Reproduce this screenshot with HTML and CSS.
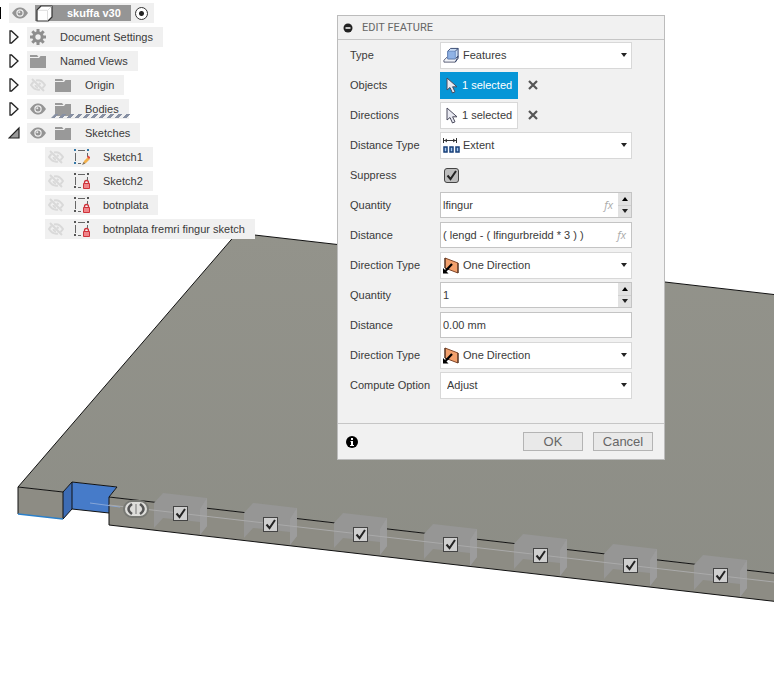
FILE: index.html
```html
<!DOCTYPE html>
<html lang="en">
<head>
<meta charset="utf-8">
<title>skuffa v30</title>
<link rel="stylesheet" href="styles.css">
</head>
<body>
<svg class="defs" aria-hidden="true">
  <symbol id="eye" viewBox="0 0 16 12"><path d="M0 6C3 1.500 5.500 .5 8 .5s5 1 8 5.500c-3 4.500-5.500 5.500-8 5.500S3 10.500 0 6z" fill="#949494"/><circle cx="8" cy="6" r="3.700" fill="#f0f0f0"/><circle cx="8" cy="6" r="2.500" fill="#949494"/><circle cx="7.300" cy="5.300" r="1" fill="#e8e8e8"/></symbol>
  <symbol id="eye-off" viewBox="0 0 16 14"><g fill="none" stroke="#d9d9d9" stroke-width="2"><path d="M2 1l12 12"/><path d="M6 2.500c4-1 7 1.500 9 4.500-.8 1.200-1.500 2-2.500 3M10 11.500C6 12.500 3 10 1 7c.8-1.200 1.500-2 2.500-3"/><path d="M5.500 7c0 1.500 1.500 2.500 2.500 2.500M9 5l1.500 1.500"/></g></symbol>
  <symbol id="folder" viewBox="0 0 16 13"><path d="M0 0h7l1.500 2H0z" fill="#999"/><path d="M0 3h9l1.500-2H16v12H0z" fill="#999"/></symbol>
  <symbol id="gear" viewBox="0 0 16 16"><circle cx="8" cy="8" r="4.200" fill="none" stroke="#8e8e8e" stroke-width="3"/><path d="M8 0v3M8 13v3M0 8h3M13 8h3M2.300 2.300l2.200 2.200M11.500 11.500l2.200 2.200M13.700 2.300l-2.200 2.200M4.500 11.500l-2.200 2.200" stroke="#8e8e8e" stroke-width="3"/></symbol>
  <symbol id="closed" viewBox="0 0 12 14"><path d="M2 1h1.500L10 7l-6.500 6H2z" fill="#fafafa" stroke="#222" stroke-width="1.300"/></symbol>
  <symbol id="open" viewBox="0 0 12 12"><path d="M11 1v10H1z" fill="#999" stroke="#222" stroke-width="1.200"/></symbol>
  <symbol id="frame" viewBox="0 0 16 16"><path d="M4 1.500h7M1.500 4v8M13.500 4v4M4 14.500h3" stroke="#666" fill="none"/><path d="M0 0h2v2H0zM13 0h2v2h-2zM0 13h2v2H0z" fill="#555"/></symbol>
  <symbol id="sketch-edit" viewBox="0 0 16 16"><use href="#frame" width="16" height="16"/><path d="M0 0h2v2H0zM13 0h2v2h-2zM0 13h2v2H0z" fill="#3478a8"/><path d="M9 15l1-3 4-4 2 2-4 4z" fill="#f2b04c"/><path d="M13 8l1-1.500 2.500 2L15 10z" fill="#df4b42"/><path d="M8 16l1.500-3 2 1.500z" fill="#8a7558"/></symbol>
  <symbol id="sketch-lock" viewBox="0 0 16 16"><use href="#frame" width="16" height="16"/><path d="M10.500 11V9.500a2 2 0 0 1 4 0V11" fill="none" stroke="#cf333b" stroke-width="1.300"/><path d="M9.500 10.500h6v5h-6z" fill="#ef858a" stroke="#cf333b"/></symbol>
  <symbol id="cube" viewBox="0 0 17 17"><path d="M1 5l4-4h11v11l-4 4H1z" fill="#fff" stroke="#333" stroke-linejoin="round" stroke-width="1.200"/><path d="M2 5.300h9.500v10M12 5l3.500-3.500" fill="none" stroke="#ddd"/></symbol>
  <symbol id="cursor" viewBox="0 0 12 17"><path d="M1 1v12l3-2.500 2.500 5.500 2.500-1.200-2.400-5H11z" fill="#e9eaf2" stroke="#4a4a5c"/></symbol>
  <symbol id="feature" viewBox="0 0 18 17"><path d="M1 13.500l4-4h11l-3 6H1z" fill="#f1f3f8" stroke="#555b74"/><path d="M5 4l3-3h8v8l-3 3H5z" fill="#c7daf3" stroke="#34456f"/><path d="M5 4h8v8H5z" fill="#8fb2e5" stroke="#6d8ec4"/><path d="M13 4l3-3M13 15.500l3-4V9" fill="none" stroke="#34456f"/></symbol>
  <symbol id="extent" viewBox="0 0 17 15"><path d="M.5 0v5M13.500 0v5M1 2.500h12M4 1L2 2.500 4 4M10 1l2 1.500L10 4" fill="none" stroke="#333"/><path d="M1 9h3v5H1zM7 9h3v5H7zM13 9h3v5h-3z" fill="#a8cbf1" stroke="#173f78" stroke-width="1.500"/></symbol>
  <symbol id="direction" viewBox="0 0 17 17"><path d="M2 1l13 5v10L2 11z" fill="#f2a06c" stroke="#7f4628"/><path d="M2 1v10l4 1.500M15 6v10" fill="none" stroke="#40281d"/><path d="M9 7L2.500 14" stroke="#000" stroke-width="2.200"/><path d="M0 11v5.500h5.500z" fill="#000"/></symbol>
  <symbol id="caret" viewBox="0 0 6 4"><path d="M0 0h6L3 4z" fill="#222"/></symbol>
  <symbol id="caret-up" viewBox="0 0 6 4"><path d="M0 4h6L3 0z" fill="#000"/></symbol>
  <symbol id="cross" viewBox="0 0 10 10"><path d="M1 1l8 8M9 1L1 9" stroke="#555" stroke-width="2.200"/></symbol>
  <symbol id="tick" viewBox="0 0 15 15"><path d="M3.500 7.500l3 3.500 5.500-8" fill="none" stroke="#222" stroke-width="2"/></symbol>
  <symbol id="ghost" viewBox="0 0 54 44"><path d="M0 10L9 0l44 5v28l-7 9V29L9 25 0 35z" fill="#969695"/><path d="M46 16l7-11v28l-7 9z" fill="#9c9c9c"/></symbol>
</svg>

<main class="workspace">
  <svg class="scene" role="img" aria-label="Drawer base plate with finger slots">
    <defs>
      <linearGradient id="plate" x1="0" y1="0" x2="0" y2="1"><stop offset="0" stop-color="#93938b"/><stop offset="1" stop-color="#8a8b84"/></linearGradient>
    </defs>
    <path d="M18 487L237 233 1974 432V711L109 497l8-10-45-5-9 10z" fill="url(#plate)"/>
    <path d="M18 487l45 5v27l-45-5zM109 497l1865 214v28L109 525z" fill="#8d8c84"/>
    <path d="M72 482l45 5-8 10v16l-37-4z" fill="#467bc9"/>
    <path d="M63 492l9-10v27l-9 10z" fill="#3d6cb5"/>
    <path class="edge" d="M63 492l-45-5L237 233l1737 199M18 487v27M63 519v-27l9-10 45 5-8 10 1865 214M72 482v27l37 4M63 519l9-10M109 497v28l1865 214"/>
    <path d="M18 514l45 5" stroke="#2a7fca" stroke-width="1.500"/>
    <use href="#ghost" x="154" y="493" width="54" height="44"/>
    <use href="#ghost" x="244" y="503" width="54" height="44"/>
    <use href="#ghost" x="334" y="513" width="54" height="44"/>
    <use href="#ghost" x="424" y="524" width="54" height="44"/>
    <use href="#ghost" x="514" y="534" width="54" height="44"/>
    <use href="#ghost" x="604" y="544" width="54" height="44"/>
    <use href="#ghost" x="694" y="555" width="54" height="44"/>
    <path d="M90 503l30 4" stroke="#86a6d8"/>
    <path d="M109 505l1865 216" stroke="#aaaaaa"/>
    <rect x="124" y="501" width="24" height="16" rx="8" fill="#dededb" stroke="#777873" stroke-width="2"/>
    <path d="M132 504q-7 5 0 10M140 504q7 5 0 10" fill="none" stroke="#555" stroke-width="2.500"/>
    <path d="M136 504v10" stroke="#777"/>
  </svg>

  <label class="tick pin" style="left:173px;top:506px"><input type="checkbox" checked aria-label="Instance 2"><svg><use href="#tick"/></svg></label>
  <label class="tick pin" style="left:263px;top:517px"><input type="checkbox" checked aria-label="Instance 3"><svg><use href="#tick"/></svg></label>
  <label class="tick pin" style="left:353px;top:527px"><input type="checkbox" checked aria-label="Instance 4"><svg><use href="#tick"/></svg></label>
  <label class="tick pin" style="left:443px;top:537px"><input type="checkbox" checked aria-label="Instance 5"><svg><use href="#tick"/></svg></label>
  <label class="tick pin" style="left:533px;top:548px"><input type="checkbox" checked aria-label="Instance 6"><svg><use href="#tick"/></svg></label>
  <label class="tick pin" style="left:623px;top:558px"><input type="checkbox" checked aria-label="Instance 7"><svg><use href="#tick"/></svg></label>
  <label class="tick pin" style="left:713px;top:568px"><input type="checkbox" checked aria-label="Instance 8"><svg><use href="#tick"/></svg></label>

  <nav class="browser" aria-label="Browser">
    <div class="row root">
      <span class="mark"></span>
      <div class="chip">
        <svg class="i-eye"><use href="#eye"/></svg>
        <span class="doc"><svg class="i-cube"><use href="#cube"/></svg><b>skuffa v30</b></span>
        <input class="active" type="radio" checked aria-label="Activate component">
      </div>
    </div>
    <ul>
      <li class="row"><svg class="toggle"><use href="#closed"/></svg><div class="chip"><svg class="i-gear"><use href="#gear"/></svg><span>Document Settings</span></div></li>
      <li class="row"><svg class="toggle"><use href="#closed"/></svg><div class="chip"><svg class="i-folder"><use href="#folder"/></svg><span>Named Views</span></div></li>
      <li class="row"><svg class="toggle"><use href="#closed"/></svg><div class="chip"><svg class="i-eye"><use href="#eye-off"/></svg><svg class="i-folder"><use href="#folder"/></svg><span>Origin</span></div></li>
      <li class="row"><svg class="toggle"><use href="#closed"/></svg><div class="chip hatched"><svg class="i-eye"><use href="#eye"/></svg><svg class="i-folder"><use href="#folder"/></svg><span>Bodies</span></div></li>
      <li>
        <div class="row"><svg class="toggle"><use href="#open"/></svg><div class="chip"><svg class="i-eye"><use href="#eye"/></svg><svg class="i-folder"><use href="#folder"/></svg><span>Sketches</span></div></div>
        <ul class="children">
          <li class="row"><div class="chip"><svg class="i-eye"><use href="#eye-off"/></svg><svg class="i-sketch"><use href="#sketch-edit"/></svg><span>Sketch1</span></div></li>
          <li class="row"><div class="chip"><svg class="i-eye"><use href="#eye-off"/></svg><svg class="i-sketch"><use href="#sketch-lock"/></svg><span>Sketch2</span></div></li>
          <li class="row"><div class="chip"><svg class="i-eye"><use href="#eye-off"/></svg><svg class="i-sketch"><use href="#sketch-lock"/></svg><span>botnplata</span></div></li>
          <li class="row"><div class="chip"><svg class="i-eye"><use href="#eye-off"/></svg><svg class="i-sketch"><use href="#sketch-lock"/></svg><span>botnplata fremri fingur sketch</span></div></li>
        </ul>
      </li>
    </ul>
  </nav>

  <form class="dialog" aria-labelledby="dialog-title">
    <header>
      <svg class="i-collapse" viewBox="0 0 10 10"><circle cx="5" cy="5" r="4.500" fill="#222"/><path d="M2.500 5h5" stroke="#fff" stroke-width="1.500"/></svg>
      <h1 id="dialog-title">EDIT FEATURE</h1>
    </header>
    <div class="fields">
      <label for="type">Type</label>
      <div class="combo"><svg class="glyph"><use href="#feature"/></svg><select id="type"><option>Features</option></select><svg class="caret"><use href="#caret"/></svg></div>

      <label for="objects">Objects</label>
      <div class="picker"><button type="button" id="objects" class="pick on"><svg><use href="#cursor"/></svg>1 selected</button><button type="button" class="clear" aria-label="Clear objects"><svg><use href="#cross"/></svg></button></div>

      <label for="directions">Directions</label>
      <div class="picker"><button type="button" id="directions" class="pick"><svg><use href="#cursor"/></svg>1 selected</button><button type="button" class="clear" aria-label="Clear directions"><svg><use href="#cross"/></svg></button></div>

      <label for="distance-type">Distance Type</label>
      <div class="combo"><svg class="glyph"><use href="#extent"/></svg><select id="distance-type"><option>Extent</option></select><svg class="caret"><use href="#caret"/></svg></div>

      <label for="suppress">Suppress</label>
      <div class="tick round"><input type="checkbox" id="suppress" checked><svg><use href="#tick"/></svg></div>

      <label for="quantity-1">Quantity</label>
      <div class="entry"><input type="text" id="quantity-1" value="lfingur"><i>fx</i><span class="spin"><button type="button" aria-label="Increase"><svg><use href="#caret-up"/></svg></button><button type="button" aria-label="Decrease"><svg><use href="#caret"/></svg></button></span></div>

      <label for="distance-1">Distance</label>
      <div class="entry"><input type="text" id="distance-1" value="( lengd - ( lfingurbreidd * 3 ) )"><i>fx</i></div>

      <label for="direction-1">Direction Type</label>
      <div class="combo"><svg class="glyph"><use href="#direction"/></svg><select id="direction-1"><option>One Direction</option></select><svg class="caret"><use href="#caret"/></svg></div>

      <label for="quantity-2">Quantity</label>
      <div class="entry"><input type="text" id="quantity-2" value="1"><span class="spin"><button type="button" aria-label="Increase"><svg><use href="#caret-up"/></svg></button><button type="button" aria-label="Decrease"><svg><use href="#caret"/></svg></button></span></div>

      <label for="distance-2">Distance</label>
      <div class="entry"><input type="text" id="distance-2" value="0.00 mm"></div>

      <label for="direction-2">Direction Type</label>
      <div class="combo"><svg class="glyph"><use href="#direction"/></svg><select id="direction-2"><option>One Direction</option></select><svg class="caret"><use href="#caret"/></svg></div>

      <label for="compute">Compute Option</label>
      <div class="combo plain"><select id="compute"><option>Adjust</option></select><svg class="caret"><use href="#caret"/></svg></div>
    </div>
    <footer>
      <svg class="i-info" viewBox="0 0 12 12"><circle cx="6" cy="6" r="6" fill="#000"/><path d="M5 2h2v2H5zM4.500 5H7v4h1v1H4V9h1V6h-.5z" fill="#fff"/></svg>
      <button type="button">OK</button>
      <button type="button">Cancel</button>
    </footer>
  </form>
</main>
</body>
</html>
```
FILE: styles.css
```css
* { box-sizing: border-box; }
body {
  margin: 0;
  background: #fff;
  color: #3a3a3a;
  font: 11px/20px "Liberation Sans", Arial, sans-serif;
}
svg { display: block; flex: none; }
button, input, select { margin: 0; font: inherit; color: inherit; }
ul { list-style: none; margin: 0; padding: 0; }
.defs { position: absolute; width: 0; height: 0; }

.workspace { position: relative; min-height: 100vh; overflow: hidden; }
.scene { position: absolute; inset: 0; width: 100%; height: 100%; }
.edge { fill: none; stroke: #111; stroke-width: 1; }

/* Check boxes */
.tick { display: grid; width: 15px; height: 15px; }
.tick > * { grid-area: 1 / 1; width: 15px; height: 15px; }
.tick input { appearance: none; background: #cfcfcf; border: 1px solid #444; }
.tick svg { pointer-events: none; }
.tick input:not(:checked) + svg { visibility: hidden; }
.pin { position: absolute; }
.round { margin-left: 4px; }
.round input { background: #bdbdbd; border-radius: 3px; }

/* Browser tree */
.browser { position: relative; width: fit-content; padding-top: 3px; }
.row { display: flex; align-items: center; height: 20px; margin-bottom: 4px; }
.chip { position: relative; display: flex; align-items: center; height: 20px; padding: 0 10px 0 3px; background: #f0f0f0; white-space: nowrap; }
.browser ul .row { padding-left: 8px; }
.browser ul.children .row { padding-left: 45px; }
.toggle { width: 12px; height: 14px; margin-right: 7px; }
.mark { width: 1px; height: 12px; margin-right: 8px; background: #000; }
.i-eye { width: 16px; height: 14px; margin-right: 9px; }
.i-folder { width: 16px; height: 13px; margin-right: 14px; }
.i-gear { width: 16px; height: 16px; margin-right: 14px; }
.i-sketch { width: 16px; height: 16px; margin-left: 1px; margin-right: 13px; }
.i-cube { width: 17px; height: 17px; margin-right: 14px; }
.root .chip { padding-right: 6px; }
.root .i-eye { margin-right: 7px; }
.doc { display: flex; align-items: center; height: 16px; padding: 0 10px 0 1px; background: #959595; color: #fff; }
.active { appearance: none; width: 13px; height: 13px; margin-left: 4px; border: 1px solid #333; border-radius: 50%; background: radial-gradient(circle, #222 2px, #fff 3px); }
.hatched::after {
  content: "";
  position: absolute;
  left: 26px;
  right: 0;
  bottom: 1px;
  height: 4px;
  background: repeating-linear-gradient(90deg, #8790a3 0 4px, transparent 4px 8px);
  transform: skewX(-45deg);
}

/* Edit Feature dialog */
.dialog { position: absolute; left: 337px; top: 15px; width: 328px; border: 1px solid #bcbcbc; background: #f1f1f1; }
.dialog header { display: flex; align-items: center; gap: 9px; height: 24px; padding-left: 5px; border-bottom: 1px solid #c6c6c6; }
.dialog h1 { margin: 0; font: 11px/20px Roboto, "Open Sans", sans-serif; color: #666; }
.i-collapse { width: 10px; height: 10px; }
.fields { display: grid; grid-template-columns: 90px 1fr; grid-auto-rows: 30px; align-items: center; padding: 0 32px 23px 12px; }
.combo, .entry { display: flex; align-items: center; height: 26px; background: #fff; border: 1px solid #c4c4c4; }
.combo { position: relative; height: 27px; border: 1px solid #d8d8d8; }
.combo select { appearance: none; width: 100%; height: 100%; padding: 0 20px 0 22px; border: 0; background: none; outline: none; }
.combo.plain select { padding-left: 6px; }
.glyph { position: absolute; left: 2px; width: 17px; height: 17px; }
.caret { position: absolute; right: 4px; width: 6px; height: 4px; pointer-events: none; }
.entry input { flex: 1; min-width: 0; height: 100%; padding: 0 2px; border: 0; background: none; outline: none; }
.entry i { margin-right: 5px; color: #aaa; font: italic 11px/20px "Open Sans", sans-serif; }
.spin { display: flex; flex-direction: column; width: 13px; height: 100%; background: #e2e2e2; }
.spin button { flex: 1; display: grid; place-items: center; padding: 0; border: 0; background: none; }
.spin button + button { border-top: 1px solid #d0d0d0; }
.spin svg { width: 6px; height: 4px; }
.picker { display: flex; align-items: center; gap: 10px; }
.pick { display: flex; align-items: center; gap: 4px; width: 78px; height: 27px; padding: 0 0 0 5px; border: 1px solid #d8d8d8; background: #fff; white-space: nowrap; }
.pick svg { width: 12px; height: 17px; }
.pick.on { border-color: #0696d7; background: #0696d7; color: #fff; }
.clear { padding: 0; border: 0; background: none; }
.clear svg { width: 10px; height: 10px; }
.dialog footer { display: flex; align-items: center; gap: 10px; height: 36px; padding: 0 11px 0 8px; border-top: 1px solid #c6c6c6; }
.i-info { width: 12px; height: 12px; margin-right: auto; }
.dialog footer button { width: 60px; height: 19px; padding: 0; border: 1px solid #b4b4b4; background: #e9e9e9; color: #666; font-size: 13px; line-height: 17px; }
```
